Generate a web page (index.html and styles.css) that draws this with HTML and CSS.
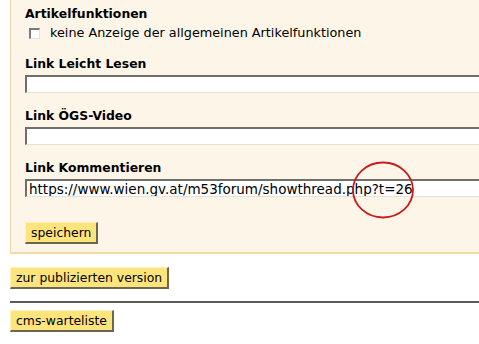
FILE: index.html
```html
<!DOCTYPE html>
<html lang="de">
<head>
    <meta charset="UTF-8">
    <title>Artikel bearbeiten</title>
    <link rel="stylesheet" href="styles.css">
</head>
<body>
    <div class="edit-box">
        <div class="field">
            <h3 class="label">Artikelfunktionen</h3>
            <label class="check-row">
                <span class="checkbox"></span>
                keine Anzeige der allgemeinen Artikelfunktionen
            </label>
        </div>
        <div class="field">
            <h3 class="label">Link Leicht Lesen</h3>
            <input type="text" class="text-input" value="">
        </div>
        <div class="field">
            <h3 class="label">Link ÖGS-Video</h3>
            <input type="text" class="text-input" value="">
        </div>
        <div class="field">
            <h3 class="label">Link Kommentieren</h3>
            <div class="marked">
                <input type="text" class="text-input" value="https://www.wien.gv.at/m53forum/showthread.php?t=26">
                <svg class="circle" width="66" height="60" viewBox="0 0 66 60">
                    <ellipse cx="33" cy="30" rx="30" ry="27.5" fill="none" stroke="#cc1a1a" stroke-width="1.8"/>
                </svg>
            </div>
        </div>
        <button class="btn save">speichern</button>
    </div>

    <button class="btn">zur publizierten version</button>
    <hr class="divider">
    <button class="btn">cms-warteliste</button>
</body>
</html>
```

FILE: styles.css
```css
body {
	margin: 0;
	padding-left: 10px;
	overflow: hidden;
	background: #ffffff;
	font-family: "DejaVu Sans", Verdana, sans-serif;
	color: #000;
}
.edit-box {
	width: 520px;
	background-color: #fdf6e8;
	border-left: 1px solid #f3d6a4;
	border-bottom: 2px solid #f6d9a6;
	padding: 6px 0 8px 14px;
}
.field {
	margin-bottom: 15px;
}
.label {
	margin: 0;
	font-size: 12.4px;
	font-weight: bold;
	line-height: 15px;
}
.check-row {
	display: flex;
	align-items: center;
	gap: 10px;
	margin: 4px 0 0 4px;
	font-size: 12.8px;
	line-height: 16px;
}
.checkbox {
	width: 8px;
	height: 8px;
	border-top: 2px solid #7a7a7a;
	border-left: 2px solid #7a7a7a;
	border-right: 1px solid #e0e0e0;
	border-bottom: 1px solid #e0e0e0;
	background: #fff;
}
.text-input {
	display: block;
	box-sizing: border-box;
	width: 470px;
	height: 18px;
	margin-top: 4px;
	padding: 0 2px;
	border-top: 2px solid #6e6e6a;
	border-left: 2px solid #6e6e6a;
	border-right: 1px solid #e4e2dc;
	border-bottom: 1px solid #e4e2dc;
	background: #fff;
	font-family: "DejaVu Sans", Verdana, sans-serif;
	font-size: 13.5px;
	color: #000;
	outline: none;
}
.marked {
	position: relative;
}
.circle {
	position: absolute;
	left: 325px;
	top: -19px;
}
.btn {
	display: block;
	padding: 2px 5px 1px 5px;
	background-color: #fde47c;
	border-top: 1px solid #fff2b8;
	border-left: 1px solid #fff2b8;
	border-right: 2px solid #6a6650;
	border-bottom: 2px solid #6a6650;
	font-family: "DejaVu Sans", Verdana, sans-serif;
	font-size: 12.4px;
	line-height: 16px;
	color: #000;
	margin: 13px 0 0 0;
}
.edit-box .save {
	margin-top: 25px;
}
.divider {
	margin: 12px 0 0 0;
	border: none;
	border-top: 2px solid #5a5a5a;
}
.divider + .btn {
	margin-top: 7px;
}
```
